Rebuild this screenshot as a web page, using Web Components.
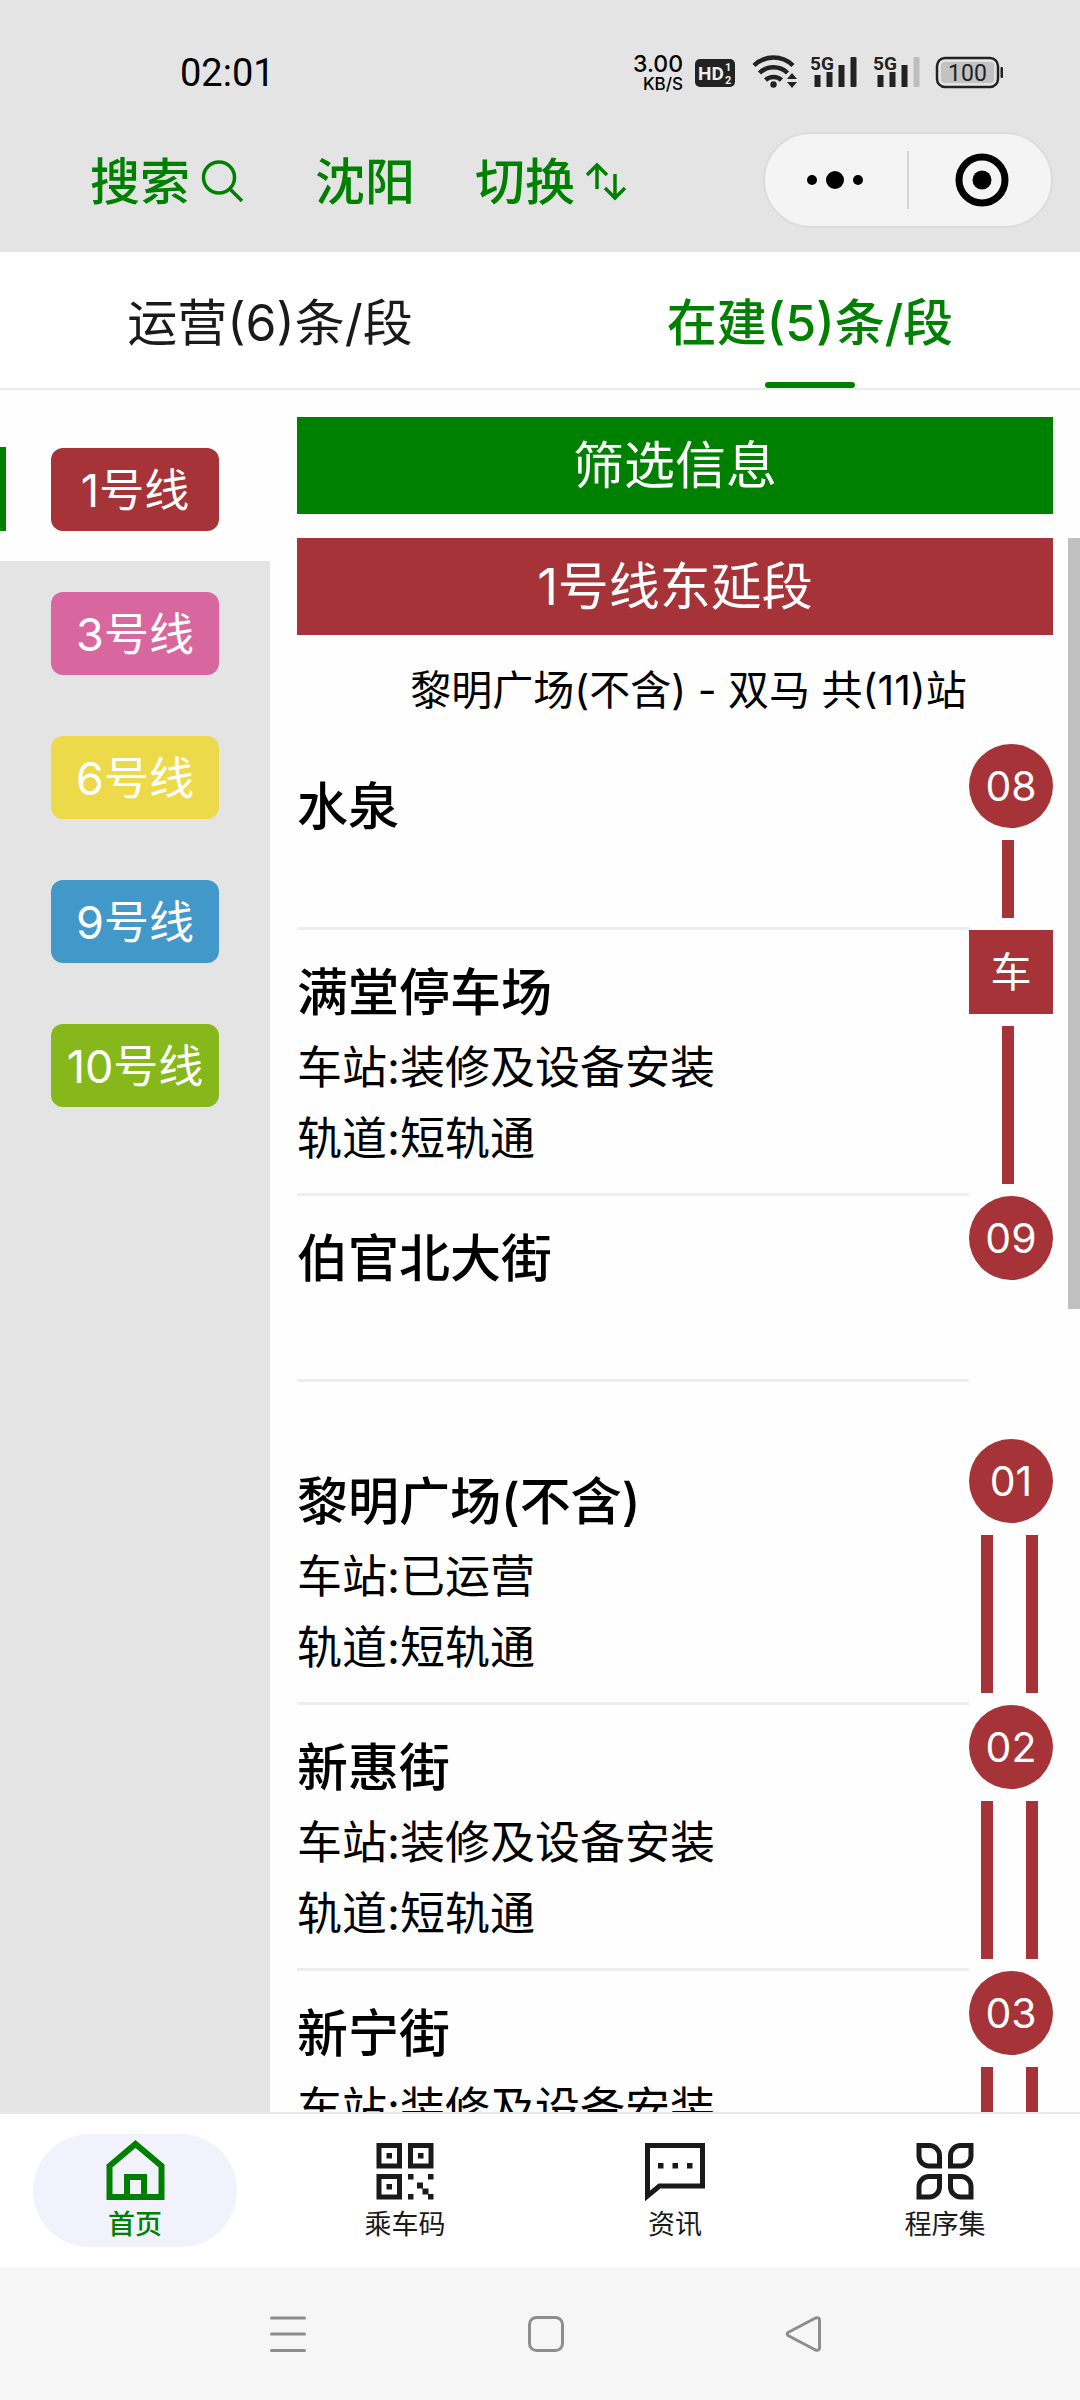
<!DOCTYPE html>
<html lang="zh-CN">
<head>
<meta charset="utf-8">
<meta name="viewport" content="width=device-width">
<title>地铁线路</title>
<style>
  body { margin: 0; font-family: Inter, "Noto Sans CJK SC", sans-serif; color: #000; background: #fefefe; }
</style>
</head>
<body>
<metro-app>
  <status-bar slot="top" time="02:01"></status-bar>
  <title-bar slot="top"></title-bar>
  <line-tabs slot="top">
    <line-tab>运营(6)条/段</line-tab>
    <line-tab active>在建(5)条/段</line-tab>
  </line-tabs>

  <line-item slot="side" active style="--line:#a53337">1号线</line-item>
  <line-item slot="side" style="--line:#d7679e">3号线</line-item>
  <line-item slot="side" style="--line:#ecda4a">6号线</line-item>
  <line-item slot="side" style="--line:#4298c8">9号线</line-item>
  <line-item slot="side" style="--line:#86b81b">10号线</line-item>

  <line-detail heading="1号线东延段" summary="黎明广场(不含) - 双马 共(11)站">
    <metro-stop code="08" rail="single" name="水泉"></metro-stop>
    <metro-stop code="车" depot rail="single" name="满堂停车场"><span>车站:装修及设备安装</span><span>轨道:短轨通</span></metro-stop>
    <metro-stop code="09" name="伯官北大街"></metro-stop>
    <metro-stop code="01" start rail="double" name="黎明广场(不含)"><span>车站:已运营</span><span>轨道:短轨通</span></metro-stop>
    <metro-stop code="02" rail="double" name="新惠街"><span>车站:装修及设备安装</span><span>轨道:短轨通</span></metro-stop>
    <metro-stop code="03" rail="double" name="新宁街"><span>车站:装修及设备安装</span></metro-stop>
  </line-detail>

  <tab-item slot="tabbar" active>
    <svg slot="icon" viewBox="0 0 60 60" fill="none" stroke="currentColor" stroke-width="6"><path d="M4.500 26L30.500 4L56.500 26V57H4.500ZM22 57V37H39V57"/></svg>首页
  </tab-item>
  <tab-item slot="tabbar">
    <svg slot="icon" viewBox="0 0 60 60" fill="none" stroke="currentColor" stroke-width="5"><path d="M4 5.500H24.500V26H4ZM35.500 5.500H56V26H35.500ZM4 36.500H24.500V57H4Z"/><path fill="currentColor" stroke="none" d="M11.500 13h5.500v5.500h-5.500zM43 13h5.500v5.500H43zM11.500 44h5.500v5.500h-5.500zM33 34h5.500v5.500H33zM53 34h5.500v5.500H53zM42 42.500h6v6h5.500v6h-6v-6H42zM33 54h5.500v5.500H33zM53 54h5.500v5.500H53z"/></svg>乘车码
  </tab-item>
  <tab-item slot="tabbar">
    <svg slot="icon" viewBox="0 0 60 60" fill="none" stroke="currentColor" stroke-width="5"><path d="M2.500 5.500H57.500V46H14.500L2.500 56Z"/><path fill="currentColor" stroke="none" d="M13 23h5.500v5.500H13zM27.500 23H33v5.500h-5.500zM42 23h5.500v5.500H42z"/></svg>资讯
  </tab-item>
  <tab-item slot="tabbar">
    <svg slot="icon" viewBox="0 0 60 60" fill="none" stroke="currentColor" stroke-width="5"><path d="M4 5.500H14.500A10 10 0 0 1 24.500 15.500V26H14A10 10 0 0 1 4 16ZM56 5.500H45.500A10 10 0 0 0 35.500 15.500V26H46A10 10 0 0 0 56 16ZM4 57H14.500A10 10 0 0 0 24.500 47V36.500H14A10 10 0 0 0 4 46.500ZM56 57H45.500A10 10 0 0 1 35.500 47V36.500H46A10 10 0 0 1 56 46.500Z"/></svg>程序集
  </tab-item>

  <system-nav slot="bottom"></system-nav>
</metro-app>

<script>
const define = (name, markup, setup) => {
  const template = document.createElement('template');
  template.innerHTML = `<style>
    :host{box-sizing:border-box}
    *{box-sizing:border-box}
    button{font:inherit;color:inherit;background:none;border:0;padding:0;margin:0;cursor:pointer}
    svg{display:block;flex:none}
  </style>` + markup;
  customElements.define(name, class extends HTMLElement {
    constructor() {
      super();
      this.attachShadow({ mode: 'open' }).append(template.content.cloneNode(true));
    }
    connectedCallback() {
      if (setup) setup(this, this.shadowRoot);
    }
  });
};

define('metro-app', `
  <style>
    :host{display:flex;flex-direction:column;height:100vh;overflow:hidden}
    main{flex:1;min-height:0;display:flex}
    aside{width:25%;padding-top:27px;display:flex;flex-direction:column}
    aside::after{content:"";flex:1;background:#e4e4e4}
    section{flex:1;min-width:0;display:flex}
    nav{display:flex;height:155px;align-items:center;border-top:2px solid #e8e8e8;background:#fff;flex:none}
  </style>
  <header><slot name="top"></slot></header>
  <main><aside><slot name="side"></slot></aside><section><slot></slot></section></main>
  <nav aria-label="主导航"><slot name="tabbar"></slot></nav>
  <slot name="bottom"></slot>`);

define('status-bar', `
  <style>
    :host{display:flex;align-items:center;height:108px;padding:38px 63px 0 180px;background:#e4e4e4}
    time{font-family:Roboto,sans-serif;font-size:38px;line-height:40px;margin-right:auto}
    .rate{display:flex;flex-direction:column;align-items:flex-end;font-weight:500;font-size:23px;line-height:21px;margin-right:12px}
    .rate small{font-size:17px;line-height:18px}
    svg{font-family:Roboto,sans-serif;font-weight:700}
  </style>
  <time></time>
  <div class="rate"><span>3.00</span><small>KB/S</small></div>
  <svg width="322" height="60" viewBox="695 43 322 60" fill="#222">
    <rect x="695" y="59" width="40" height="28" rx="5"/>
    <g fill="#eee"><text x="698" y="80" font-size="19">HD</text><text x="725" y="71" font-size="11">1</text><text x="725" y="84" font-size="11">2</text></g>
    <g fill="none" stroke="#222" stroke-width="4.500"><path d="M754 65.500A28 28 0 0 1 793 65.500"/><path d="M759.500 73A20 20 0 0 1 787.500 73"/><path d="M765.500 80A12 12 0 0 1 781.500 80"/></g>
    <circle cx="773.500" cy="84.500" r="3.200"/>
    <path d="M787 79l5-6 5 6zM787 82h10l-5 6z"/>
    <text x="810" y="70" font-size="19">5G</text><path d="M814.500 75h6v12h-6zM826.500 72h6v15h-6zM838.500 65h6v22h-6z"/>
    <rect x="850.500" y="57" width="6" height="30" rx="1"/>
    <text x="873" y="70" font-size="19">5G</text><path d="M877.500 75h6v12h-6zM889.500 72h6v15h-6zM901.500 65h6v22h-6z"/>
    <rect x="913.500" y="57" width="6" height="30" rx="1" fill="#bdbdbd"/>
    <rect x="937" y="58" width="61" height="29" rx="8" fill="none" stroke="#222" stroke-width="2.500"/>
    <rect x="941" y="62" width="53" height="21" rx="4" fill="#c2c2c2"/>
    <rect x="1000.500" y="67" width="2.500" height="11" rx="1"/>
    <text x="967.500" y="81" font-size="23" font-weight="400" text-anchor="middle">100</text>
  </svg>`, (el, root) => { root.querySelector('time').textContent = el.getAttribute('time'); });

define('title-bar', `
  <style>
    :host{display:flex;align-items:center;gap:60px;height:144px;padding:0 27px 0 90px;background:#e4e4e4;color:green;font-size:50px;line-height:72px;font-weight:500}
    button{display:flex;align-items:center;gap:9px;white-space:nowrap}
    .label{padding-top:4px}
    .capsule{display:flex;align-items:center;margin-left:auto;width:290px;height:96px;border-radius:48px;background:#f4f4f4;border:2px solid #dcdcdc;color:#000}
    .capsule button{flex:1;justify-content:center}
    .capsule button + button{border-left:2px solid #d5d5d5;height:58px}
  </style>
  <button><span class="label">搜索</span><svg width="56" height="56" viewBox="0 0 56 56" fill="none" stroke="currentColor" stroke-width="3.500"><circle cx="20" cy="25.500" r="15.500"/><path d="M31 37L43 49"/></svg></button>
  <span class="label">沈阳</span>
  <button><span class="label">切换</span><svg width="56" height="56" viewBox="0 0 56 56" fill="none" stroke="currentColor" stroke-width="3.500"><path d="M13 37V13M3 23L13 13L23 23M31 22V46M21 36L31 46L41 36"/></svg></button>
  <div class="capsule">
    <button aria-label="更多"><svg width="60" height="56" viewBox="0 0 60 56"><circle cx="6" cy="28" r="5"/><circle cx="29" cy="28" r="9"/><circle cx="52" cy="28" r="5"/></svg></button>
    <button aria-label="关闭"><svg width="60" height="56" viewBox="0 0 60 56"><circle cx="32" cy="28" r="23" fill="none" stroke="#000" stroke-width="7"/><circle cx="32" cy="28" r="9.500"/></svg></button>
  </div>`);

define('line-tabs', `
  <style>:host{display:flex;height:138px;border-bottom:2px solid #ebebeb;background:#fff}</style>
  <slot></slot>`);

define('line-tab', `
  <style>
    :host{display:flex;flex:1;color:#1a1a1a;font-size:50px}
    :host([active]){color:green;font-weight:500}
    button{flex:1;display:flex;flex-direction:column;align-items:center}
    span{flex:1;display:flex;align-items:center;padding-top:4px}
    i{width:90px;height:6px;border-radius:3px}
    :host([active]) i{background:green}
  </style>
  <button><span><slot></slot></span><i></i></button>`);

define('line-item', `
  <style>
    :host{display:flex;height:144px;align-items:center;background:#e4e4e4;color:#fff;font-size:45px}
    :host([active]){background:#fefefe}
    i{width:6px;height:84px}
    :host([active]) i{background:green}
    button{width:168px;height:83px;margin:0 auto;padding-bottom:4px;border-radius:12px;background:var(--line)}
    :host([active]) .end{background:none}
  </style>
  <i></i><button><slot></slot></button><i class="end"></i>`);

define('line-detail', `
  <style>
    :host{flex:1;min-width:0;display:flex;flex-direction:column;gap:24px;padding:27px 0 0 27px;--line:#a53337}
    .bar{display:block;height:97px;margin-right:27px;font-size:51px;line-height:97px;font-weight:400;color:#fff;text-align:center;flex:none}
    button.bar{background:green}
    h2.bar{margin:0 27px 0 0;background:var(--line)}
    .scroll{position:relative;flex:1;min-height:0;overflow:hidden}
    p{margin:0;padding-top:2px;font-size:41px;line-height:107px;text-align:center}
    .stops{margin-right:27px}
    .thumb{position:absolute;top:0;right:0;width:12px;height:49%;background:#c0c0c0}
  </style>
  <button class="bar">筛选信息</button>
  <div class="scroll">
    <h2 class="bar"></h2><p></p>
    <div class="stops"><slot></slot></div>
    <div class="thumb"></div>
  </div>`, (el, root) => {
    root.querySelector('h2').textContent = el.getAttribute('heading');
    root.querySelector('p').textContent = el.getAttribute('summary');
  });

define('metro-stop', `
  <style>
    :host{display:flex;min-height:186px}
    :host([start]){margin-top:57px}
    .info{flex:1;min-width:0;padding:23px 0 19px;border-bottom:3px solid #eee;display:flex;flex-direction:column;font-size:45px;line-height:71px}
    h3{margin:0;font-size:51px;line-height:79px;font-weight:500}
    .track{width:84px;display:flex;flex-direction:column;gap:12px}
    .code{height:84px;border-radius:50%;background:var(--line);color:#fff;font-size:41px;line-height:84px;text-align:center}
    :host([depot]) .code{border-radius:0}
    .rail{flex:1;display:flex;justify-content:center;padding:0 18px 0 12px;margin-bottom:12px}
    :host([rail=double]) .rail{justify-content:space-between;padding-right:15px}
    i{width:12px;background:var(--line);display:none}
    :host([rail]) i:first-child,:host([rail=double]) i{display:block}
  </style>
  <div class="info"><h3></h3><slot></slot></div>
  <div class="track"><div class="code"></div><div class="rail"><i></i><i></i></div></div>`, (el, root) => {
    root.querySelector('h3').textContent = el.getAttribute('name');
    root.querySelector('.code').textContent = el.getAttribute('code');
  });

define('tab-item', `
  <style>
    :host{flex:1;display:flex;justify-content:center;color:#1a1a1a;font-size:27px;line-height:34px}
    a{display:flex;flex-direction:column;align-items:center;gap:8px;width:204px;height:113px;padding-top:6px;border-radius:57px;color:inherit;text-decoration:none}
    :host([active]){color:green;font-weight:500}
    :host([active]) a{background:#f2f2fd}
    ::slotted(svg){display:block;width:60px;height:60px;overflow:visible}
  </style>
  <a href="#"><slot name="icon"></slot><span><slot></slot></span></a>`);

define('system-nav', `
  <style>
    :host{display:flex;flex:none;height:133px;align-items:center;justify-content:center;gap:218px;padding-left:12px;background:#f6f6f6}
    svg{fill:none;stroke:#8e8e8e;stroke-width:3;stroke-linecap:round;stroke-linejoin:round}
  </style>
  <button aria-label="最近任务"><svg width="40" height="40" viewBox="0 0 40 40"><path d="M3.500 4h33M3.500 20h33M3.500 36.500h33"/></svg></button>
  <button aria-label="主屏幕"><svg width="40" height="40" viewBox="0 0 40 40"><rect x="3.500" y="3.500" width="33" height="33" rx="7"/></svg></button>
  <button aria-label="返回"><svg width="40" height="40" viewBox="0 0 40 40"><path d="M4 18.500L31.500 4Q35.500 3 35.500 6V34Q35.500 37 31.500 36L4 21.500Q2.500 20 4 18.500Z"/></svg></button>`);
</script>
</body>
</html>
